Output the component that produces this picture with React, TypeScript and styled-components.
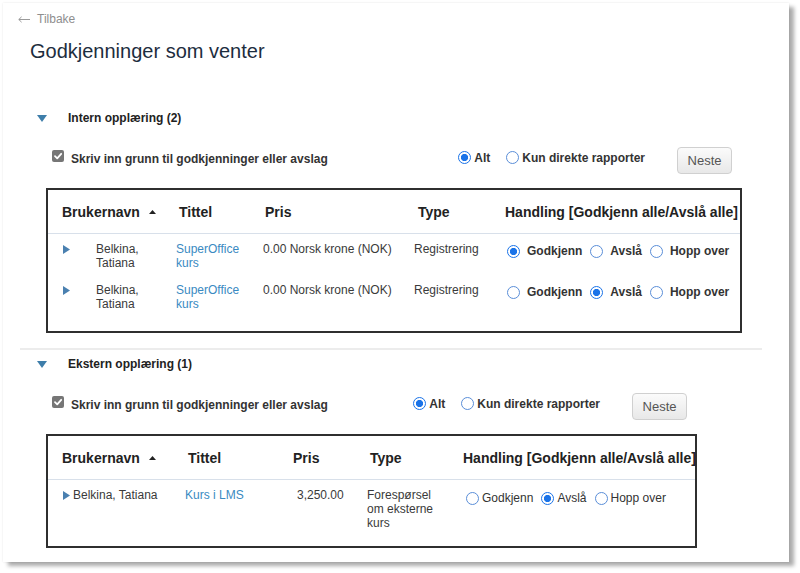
import React from "react";
import styled, { createGlobalStyle } from "styled-components";

const GlobalStyle = createGlobalStyle`
  *, *::before, *::after { box-sizing: border-box; }
  html, body { margin: 0; padding: 0; background: #ffffff; }
  body { font-family: "Liberation Sans", Arial, Helvetica, sans-serif; color: #333; }
`;

const Page = styled.div`
  width: 800px;
  height: 573px;
  padding: 3px 0 0 3px;
  overflow: hidden;
`;

const Card = styled.main`
  width: 786px;
  height: 559px;
  background: #fff;
  box-shadow: 0 0 2px rgba(0, 0, 0, 0.1), 5px 4px 4px rgba(0, 0, 0, 0.33);
  display: flex;
  flex-direction: column;
  align-items: flex-start;
`;

const BackLink = styled.a`
  margin: 9px 0 0 15px;
  height: 14px;
  display: flex;
  align-items: center;
  gap: 7px;
  font-size: 12px;
  line-height: 14px;
  color: #8e8e8e;
  text-decoration: none;
`;

const Title = styled.h1`
  margin: 13px 0 0 27px;
  font-size: 20px;
  line-height: 24px;
  font-weight: 400;
  color: #1d2d3e;
`;

const Section = styled.section<{ $top: number }>`
  margin-top: ${(p) => p.$top}px;
  padding-left: 34px;
  display: flex;
  flex-direction: column;
`;

const SectionHeader = styled.div`
  display: flex;
  align-items: center;
  height: 16px;
  gap: 21px;
`;

const SectionLabel = styled.span`
  font-size: 12px;
  line-height: 16px;
  font-weight: 700;
  color: #222;
`;

const Block = styled.div<{ $width: number }>`
  margin-left: 9px;
  width: ${(p) => p.$width}px;
  display: flex;
  flex-direction: column;
`;

const Controls = styled.div`
  margin-top: 21px;
  height: 27px;
  display: flex;
  align-items: center;
  justify-content: space-between;
  padding: 0 10px 0 6px;
`;

const ReasonLabel = styled.label`
  display: flex;
  align-items: center;
  gap: 7px;
  margin-bottom: 3px;
  font-size: 12px;
  line-height: 16px;
  font-weight: 700;
  color: #333;
`;

const CheckBox = styled.span`
  width: 12px;
  height: 12px;
  border-radius: 2px;
  background: #767676;
  display: flex;
  align-items: center;
  justify-content: center;
  margin-bottom: 6px;
`;

const RightGroup = styled.div`
  display: flex;
  align-items: center;
  gap: 32px;
`;

const Filter = styled.div`
  display: flex;
  align-items: center;
  gap: 16px;
  margin-bottom: 6px;
`;

const Option = styled.label<{ $gap: number; $bold?: boolean }>`
  display: flex;
  align-items: center;
  gap: ${(p) => p.$gap}px;
  font-size: 12px;
  line-height: 16px;
  font-weight: ${(p) => (p.$bold ? 700 : 400)};
  color: #333;
  white-space: nowrap;
`;

const RadioDot = styled.span<{ $on?: boolean }>`
  width: 13px;
  height: 13px;
  flex: none;
  border-radius: 50%;
  border: 1px solid ${(p) => (p.$on ? "#1a73e8" : "#5a8ed8")};
  background: ${(p) =>
    p.$on ? "radial-gradient(circle, #1a73e8 0 3.3px, #ffffff 3.9px)" : "#ffffff"};
`;

const NextButton = styled.button`
  width: 55px;
  height: 27px;
  border: 1px solid #d0d0d0;
  border-radius: 4px;
  background: linear-gradient(#fbfbfb, #e8e8e8);
  font-family: "Liberation Sans", Arial, sans-serif;
  font-size: 13px;
  color: #555;
  padding: 0;
`;

const TableBox = styled.div<{ $tail: number }>`
  margin-top: 14px;
  border: 2px solid #2f2f2f;
  padding-bottom: ${(p) => p.$tail}px;
`;

const HeadRow = styled.div<{ $cols: string }>`
  display: grid;
  grid-template-columns: ${(p) => p.$cols};
  height: 44px;
  align-items: center;
  padding-left: 14px;
  border-bottom: 1px solid #d8e0ea;
`;

const HeadCell = styled.div<{ $inset: number }>`
  padding-left: ${(p) => p.$inset}px;
  display: flex;
  align-items: center;
  gap: 9px;
  font-size: 14px;
  line-height: 16px;
  font-weight: 700;
  color: #222;
  white-space: nowrap;
`;

const BodyRow = styled.div<{ $cols: string }>`
  display: grid;
  grid-template-columns: ${(p) => p.$cols};
  align-items: start;
  padding: 8px 0 5px 14px;
`;

const Cell = styled.div<{ $inset: number }>`
  padding-left: ${(p) => p.$inset}px;
  padding-right: 20px;
  font-size: 12px;
  line-height: 14px;
  color: #3a3a3a;
`;

const UserCell = styled(Cell)<{ $gap: number }>`
  display: flex;
  align-items: flex-start;
  gap: ${(p) => p.$gap}px;
`;

const ExpandIcon = styled.svg`
  flex: none;
  margin-top: 2.5px;
`;

const CourseLink = styled.a`
  color: #3a8ac2;
  text-decoration: none;
`;

const Actions = styled.div<{ $inset: number; $offset: number; $gap: number }>`
  padding-left: ${(p) => p.$inset}px;
  padding-top: ${(p) => p.$offset}px;
  display: flex;
  align-items: center;
  height: ${(p) => 18 + p.$offset}px;
  gap: ${(p) => p.$gap}px;
`;

const Divider = styled.hr`
  margin: 15px 0 0 17px;
  width: 742px;
  height: 2px;
  border: none;
  background: #ececec;
`;

const BackArrow = () => (
  <svg width="12" height="7" viewBox="0 0 12 7">
    <path d="M0.8 3.5 H12 M3.6 0.8 L0.8 3.5 L3.6 6.2" fill="none" stroke="#9a9a9a" strokeWidth="1" />
  </svg>
);

const Caret = () => (
  <svg width="10" height="7" viewBox="0 0 10 7">
    <polygon points="0,0 10,0 5,7" fill="#3e7eaa" />
  </svg>
);

const SortUp = () => (
  <svg width="7" height="4" viewBox="0 0 7 4">
    <polygon points="0,4 7,4 3.5,0" fill="#222" />
  </svg>
);

const Expander = () => (
  <ExpandIcon width="7" height="9" viewBox="0 0 7 9">
    <polygon points="0,0 7,4.5 0,9" fill="#4a80b0" />
  </ExpandIcon>
);

const Check = () => (
  <svg width="10" height="10" viewBox="0 0 10 10">
    <path d="M2 5.2 L4.2 7.3 L8.2 2.8" fill="none" stroke="#fff" strokeWidth="1.8" strokeLinecap="round" strokeLinejoin="round" />
  </svg>
);

type Row = { name: string; title: string; price: string; type: string; choice: number };

type TableSpec = {
  label: string;
  width: number;
  tail: number;
  cols: string;
  headInsets: number[];
  cellInsets: number[];
  nameGap: number;
  boldActions: boolean;
  radioGap: number;
  optionGap: number;
  actionOffset: number;
  rows: Row[];
};

const headers = ["Brukernavn", "Tittel", "Pris", "Type", "Handling [Godkjenn alle/Avslå alle]"];
const choices = ["Godkjenn", "Avslå", "Hopp over"];

const sections: TableSpec[] = [
  {
    label: "Intern opplæring (2)",
    width: 696,
    tail: 15,
    cols: "114px 87px 151px 91px 1fr",
    headInsets: [0, 3, 2, 4, 0],
    cellInsets: [1, 0, 0, 0, 2],
    nameGap: 26,
    boldActions: true,
    radioGap: 7,
    optionGap: 8,
    actionOffset: 0,
    rows: [
      { name: "Belkina, Tatiana", title: "SuperOffice kurs", price: "0.00 Norsk krone (NOK)", type: "Registrering", choice: 0 },
      { name: "Belkina, Tatiana", title: "SuperOffice kurs", price: "0.00 Norsk krone (NOK)", type: "Registrering", choice: 1 },
    ],
  },
  {
    label: "Ekstern opplæring (1)",
    width: 651,
    tail: 11,
    cols: "123px 108px 74px 96px 1fr",
    headInsets: [0, 3, 0, 3, 0],
    cellInsets: [1, 0, 4, 0, 3],
    nameGap: 3,
    boldActions: false,
    radioGap: 3,
    optionGap: 8,
    actionOffset: 1,
    rows: [
      { name: "Belkina, Tatiana", title: "Kurs i LMS", price: "3,250.00", type: "Forespørsel om eksterne kurs", choice: 1 },
    ],
  },
];

const ApprovalSection = ({ spec, top }: { spec: TableSpec; top: number }) => (
  <Section $top={top}>
    <SectionHeader>
      <Caret />
      <SectionLabel>{spec.label}</SectionLabel>
    </SectionHeader>
    <Block $width={spec.width}>
      <Controls>
        <ReasonLabel>
          <CheckBox>
            <Check />
          </CheckBox>
          Skriv inn grunn til godkjenninger eller avslag
        </ReasonLabel>
        <RightGroup>
          <Filter>
            <Option $gap={3} $bold>
              <RadioDot $on />
              Alt
            </Option>
            <Option $gap={3} $bold>
              <RadioDot />
              Kun direkte rapporter
            </Option>
          </Filter>
          <NextButton>Neste</NextButton>
        </RightGroup>
      </Controls>
      <TableBox $tail={spec.tail}>
        <HeadRow $cols={spec.cols}>
          {headers.map((h, i) => (
            <HeadCell key={h} $inset={spec.headInsets[i]}>
              {h}
              {i === 0 && <SortUp />}
            </HeadCell>
          ))}
        </HeadRow>
        {spec.rows.map((r, ri) => (
          <BodyRow key={ri} $cols={spec.cols}>
            <UserCell $inset={spec.cellInsets[0]} $gap={spec.nameGap}>
              <Expander />
              <span>{r.name}</span>
            </UserCell>
            <Cell $inset={spec.cellInsets[1]}>
              <CourseLink href="#">{r.title}</CourseLink>
            </Cell>
            <Cell $inset={spec.cellInsets[2]}>{r.price}</Cell>
            <Cell $inset={spec.cellInsets[3]}>{r.type}</Cell>
            <Actions $inset={spec.cellInsets[4]} $offset={spec.actionOffset} $gap={spec.optionGap}>
              {choices.map((c, ci) => (
                <Option key={c} $gap={spec.radioGap} $bold={spec.boldActions}>
                  <RadioDot $on={ci === r.choice} />
                  {c}
                </Option>
              ))}
            </Actions>
          </BodyRow>
        ))}
      </TableBox>
    </Block>
  </Section>
);

export default function App() {
  return (
    <>
      <GlobalStyle />
      <Page>
        <Card>
          <BackLink href="#">
            <BackArrow />
            <span>Tilbake</span>
          </BackLink>
          <Title>Godkjenninger som venter</Title>
          <ApprovalSection spec={sections[0]} top={47} />
          <Divider />
          <ApprovalSection spec={sections[1]} top={6} />
        </Card>
      </Page>
    </>
  );
}
